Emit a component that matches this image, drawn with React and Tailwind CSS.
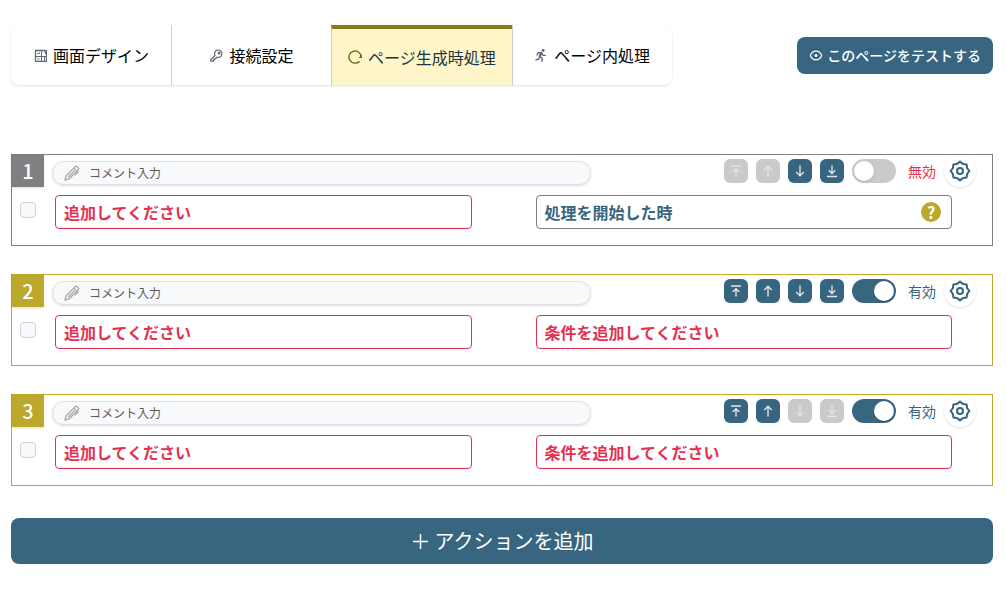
import React, { useState } from "react";

const initialActions = [
  { id: 1, enabled: false, comment: "", condition: "処理を開始した時" },
  { id: 2, enabled: true, comment: "", condition: "" },
  { id: 3, enabled: true, comment: "", condition: "" },
];

const LayoutIcon = () => (
  <svg width="14" height="14" viewBox="0 0 14 14" fill="none" stroke="currentColor" aria-hidden="true">
    <rect x="2.500" y="2.500" width="11" height="11" rx="0.500" strokeWidth="1.300" />
    <path d="M8.500 2.500v11M2.500 8.500h11" />
    <path d="M4.500 5.500h2v-1M11 4h1.500v2M4.500 11h2M11.500 9v4" />
  </svg>
);

const KeyIcon = () => (
  <svg width="14" height="14" viewBox="0 0 14 14" fill="none" stroke="currentColor" strokeWidth="1.200" strokeLinejoin="round" aria-hidden="true">
    <path d="M6 7.500A3.700 3.700 0 1 1 8 9.200L7 10.300H5.800v1.300H4.500v1.500H1.800V11.500Z" />
    <circle cx="10.100" cy="5" r="0.900" />
  </svg>
);

const ReloadIcon = () => (
  <svg width="14" height="14" viewBox="0 0 14 14" fill="none" stroke="currentColor" strokeWidth="1.300" aria-hidden="true">
    <path d="M11.500 11.200A6.100 6.100 0 1 1 13.100 6.500" />
    <path d="M14 4.500V8H10.500Z" fill="currentColor" stroke="none" />
  </svg>
);

const RunIcon = () => (
  <svg width="14" height="14" viewBox="0 0 14 14" fill="none" stroke="currentColor" strokeWidth="1.400" strokeLinecap="round" strokeLinejoin="round" aria-hidden="true">
    <circle cx="9.200" cy="2.500" r="1.400" fill="currentColor" stroke="none" />
    <path d="M7.300 5 5.800 8.300" strokeWidth="2.200" />
    <path d="M3 6.800l1.300-2 3 .1 1.700 2.300 2.200.2M6 8.500l2.300 1.700-.4 3M5.500 9.500 4.500 11.300 2 11.700" />
  </svg>
);

const EyeIcon = () => (
  <svg width="14" height="14" viewBox="0 0 14 14" fill="none" stroke="currentColor" strokeWidth="1.200" aria-hidden="true">
    <path d="M1.300 7.500C2.500 4.500 4.600 3.200 7 3.200s4.500 1.300 5.700 4.300C11.500 10.500 9.400 11.800 7 11.800S2.500 10.500 1.300 7.500Z" />
    <circle cx="7" cy="7.500" r="1.500" fill="currentColor" stroke="none" />
  </svg>
);

const PencilIcon = () => (
  <svg width="16" height="16" viewBox="0 0 16 16" fill="none" stroke="currentColor" strokeWidth="1.300" strokeLinejoin="round" aria-hidden="true">
    <path d="M1 15l1.200-4.300L11 1.900a1.700 1.700 0 0 1 2.400 0l.7.7a1.700 1.700 0 0 1 0 2.400L5.300 13.800Z" />
    <path d="M9.800 3.100l3.100 3.100M4 12.200l6.500-6.500M13 6.100l1 1-3.200 3.200" />
  </svg>
);

const GearIcon = () => (
  <svg width="24" height="24" viewBox="0 0 24 24" fill="none" stroke="currentColor" strokeWidth="2" strokeLinejoin="round" aria-hidden="true">
    <path d="M12 2.600 14.900 4.900 18.600 5.400 19.100 9.100 21.400 12 19.100 14.900 18.600 18.600 14.900 19.100 12 21.400 9.100 19.100 5.400 18.600 4.900 14.900 2.600 12 4.900 9.100 5.400 5.400 9.100 4.900Z" />
    <circle cx="12" cy="12" r="3" />
  </svg>
);

const arrowPaths = {
  top: "M3 3h10M8 13.500V6M4.700 9 8 5.800 11.300 9",
  up: "M8 13.500V3.200M4.200 7 8 3.200 11.800 7",
  down: "M8 2.500v10.300M4.200 9 8 12.800 11.800 9",
  bottom: "M3 13.500h10M8 2.500V10M4.700 7.300 8 10.500l3.300-3.200",
};

const MoveButton = ({ type, label, disabled, onClick }) => (
  <button
    type="button"
    aria-label={label}
    disabled={disabled}
    onClick={onClick}
    className="flex size-6 items-center justify-center rounded-md bg-[#38657f] text-[#dfe6ea] disabled:bg-[#cacaca] disabled:text-[#e4e4e4]"
  >
    <svg width="16" height="16" viewBox="0 0 16 16" fill="none" stroke="currentColor" strokeWidth="1.400" aria-hidden="true">
      <path d={arrowPaths[type]} />
    </svg>
  </button>
);

const tabs = [
  { key: "design", label: "画面デザイン", icon: LayoutIcon },
  { key: "connection", label: "接続設定", icon: KeyIcon },
  { key: "onload", label: "ページ生成時処理", icon: ReloadIcon },
  { key: "inpage", label: "ページ内処理", icon: RunIcon },
];

const ActionCard = ({ action, index, total, onChange, onMove }) => {
  const { enabled, condition } = action;
  const isFirst = index === 0;
  const isLast = index === total - 1;

  return (
    <section className={`border pb-4 ${enabled ? "border-[#bca82a]" : "border-[#808080]"}`}>
      <div className="flex items-start">
        <div
          className={`flex size-8 shrink-0 items-center justify-center text-xl font-medium text-white shadow-sm ${
            enabled ? "bg-[#bca82a]" : "bg-[#808080]"
          }`}
        >
          {index + 1}
        </div>
        <label className="mt-1.5 ml-2 flex h-6 w-[55%] items-center gap-[9px] rounded-full border border-[#dfe2ea] bg-[#f7f9fb] px-[11px] text-[#a8a8a8] shadow-sm">
          <PencilIcon />
          <input
            type="text"
            aria-label="コメント入力"
            placeholder="コメント入力"
            value={action.comment}
            onChange={(e) => onChange({ comment: e.target.value })}
            className="min-w-0 flex-1 bg-transparent text-xs text-gray-700 outline-none placeholder:text-[#5c5c5c]"
          />
        </label>

        <div className="mr-4 ml-auto flex items-center gap-2">
          <MoveButton type="top" label="一番上へ" disabled={isFirst} onClick={() => onMove(index, 0)} />
          <MoveButton type="up" label="上へ" disabled={isFirst} onClick={() => onMove(index, index - 1)} />
          <MoveButton type="down" label="下へ" disabled={isLast} onClick={() => onMove(index, index + 1)} />
          <MoveButton type="bottom" label="一番下へ" disabled={isLast} onClick={() => onMove(index, total - 1)} />
          <label className={`flex items-center gap-3 text-sm ${enabled ? "text-[#38657f]" : "text-[#e5304f]"}`}>
            <input
              type="checkbox"
              role="switch"
              checked={enabled}
              onChange={(e) => onChange({ enabled: e.target.checked })}
              className="flex h-6 w-11 cursor-pointer appearance-none items-center rounded-full bg-[#cacaca] px-0.5 before:size-5 before:rounded-full before:bg-white before:shadow checked:justify-end checked:bg-[#38657f]"
            />
            {enabled ? "有効" : "無効"}
          </label>
          <button
            type="button"
            aria-label="設定"
            className="flex size-8 items-center justify-center rounded-full bg-white text-[#38657f] shadow-sm"
          >
            <GearIcon />
          </button>
        </div>
      </div>

      <div className="mt-2 flex items-start pr-10 pl-2">
        <input
          type="checkbox"
          aria-label={`アクション${index + 1}を選択`}
          className="mt-[7px] mr-[19px] size-4 shrink-0 appearance-none rounded border border-[#ccd1da] bg-[#f7f9fb] checked:bg-[#38657f]"
        />
        <div className="grid flex-1 grid-cols-2 gap-16">
          <button
            type="button"
            className="rounded border border-[#e5304f] px-2 py-1 text-left font-bold text-[#e5304f]"
          >
            追加してください
          </button>
          <div
            className={`flex items-center rounded border font-bold ${
              condition ? "border-[#808080] text-[#38657f]" : "border-[#e5304f] text-[#e5304f]"
            }`}
          >
            <button type="button" className="flex-1 px-2 py-1 text-left">
              {condition || "条件を追加してください"}
            </button>
            {condition && (
              <button
                type="button"
                aria-label="ヘルプ"
                className="mr-2.5 flex size-5 items-center justify-center rounded-full bg-[#bca82a] text-base leading-5 text-white"
              >
                ?
              </button>
            )}
          </div>
        </div>
      </div>
    </section>
  );
};

const App = () => {
  const [activeTab, setActiveTab] = useState("onload");
  const [actions, setActions] = useState(initialActions);

  const updateAction = (id, values) => {
    setActions((prev) => prev.map((a) => (a.id === id ? { ...a, ...values } : a)));
  };

  const moveAction = (from, to) => {
    setActions((prev) => {
      const next = [...prev];
      const [item] = next.splice(from, 1);
      next.splice(to, 0, item);
      return next;
    });
  };

  const addAction = () => {
    setActions((prev) => [
      ...prev,
      { id: Math.max(...prev.map((a) => a.id)) + 1, enabled: true, comment: "", condition: "" },
    ]);
  };

  return (
    <div className="bg-white pt-[25px] pr-[13px] pb-10 pl-[11px] font-['Noto_Sans_CJK_JP',sans-serif]">
      <header className="flex items-center justify-between">
        <div role="tablist" className="flex overflow-hidden rounded-lg shadow">
          {tabs.map(({ key, label, icon: Icon }) => (
            <button
              key={key}
              type="button"
              role="tab"
              aria-selected={activeTab === key}
              onClick={() => setActiveTab(key)}
              className={`flex h-[60px] min-w-40 items-center justify-center gap-1.5 border-l border-[#c9ccd4] px-4 first:border-l-0 ${
                activeTab === key
                  ? "border-t-4 border-t-[#8a7c17] bg-[#fef5c8] text-[#1c3545]"
                  : "bg-white text-black"
              }`}
            >
              <span className={activeTab === key ? "text-[#6e6312]" : "text-[#5f6677]"}>
                <Icon />
              </span>
              {label}
            </button>
          ))}
        </div>
        <button
          type="button"
          className="flex h-[37px] items-center gap-1 rounded-lg bg-[#38657f] px-3 text-sm font-medium text-white"
        >
          <EyeIcon />
          このページをテストする
        </button>
      </header>

      <main className="mt-[69px]">
        <div className="flex flex-col gap-7">
          {actions.map((action, index) => (
            <ActionCard
              key={action.id}
              action={action}
              index={index}
              total={actions.length}
              onChange={(values) => updateAction(action.id, values)}
              onMove={moveAction}
            />
          ))}
        </div>
        <button
          type="button"
          onClick={addAction}
          className="mt-8 flex h-[46px] w-full items-center justify-center gap-1 rounded-lg bg-[#38657f] text-xl text-white"
        >
          <svg width="20" height="20" viewBox="0 0 20 20" fill="none" stroke="currentColor" strokeWidth="1.500" aria-hidden="true">
            <path d="M9.500 3v15M2 10.500h15" />
          </svg>
          アクションを追加
        </button>
      </main>
    </div>
  );
};

export default App;
